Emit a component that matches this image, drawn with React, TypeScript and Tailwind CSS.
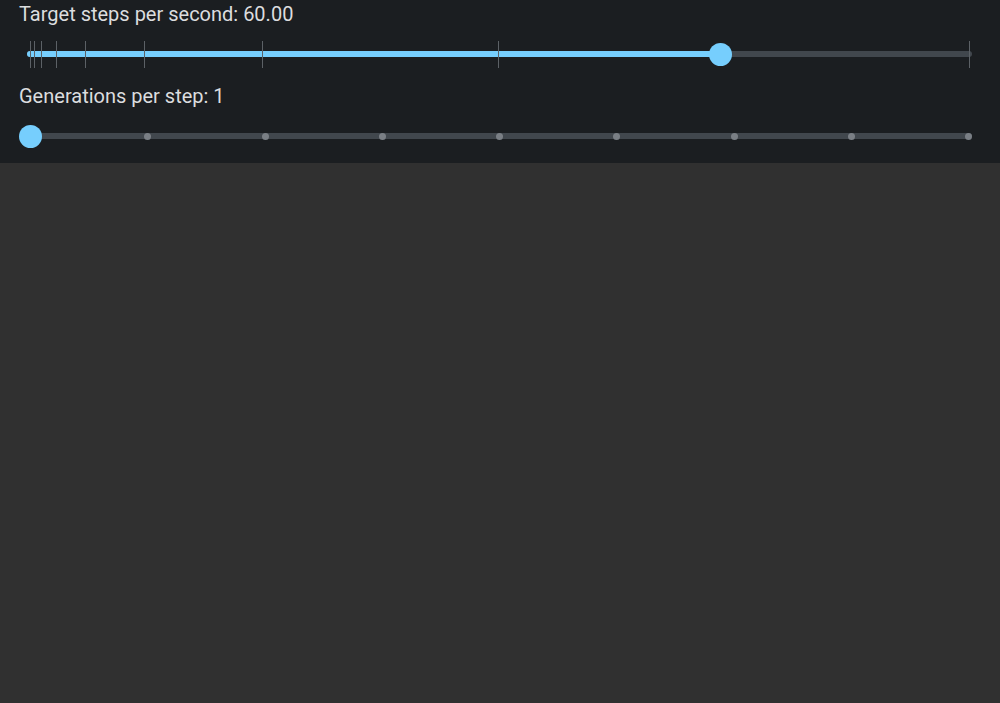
import React from "react";

const TICKS = [3, 7, 14, 29, 58, 117, 235, 471, 942];
const DOTS = [0, 1, 2, 3, 4, 5, 6, 7, 8];

function Label({ children }: { children: React.ReactNode }) {
  return (
    <div className="text-[20px] leading-[27px] text-[#dcdddf]" style={{ fontFamily: "Roboto, 'Noto Sans', sans-serif" }}>
      {children}
    </div>
  );
}

export default function App() {
  return (
    <div className="min-h-[703px] w-full bg-[#303030] flex flex-col" style={{ fontFamily: "Roboto, sans-serif" }}>
      <div className="bg-[#1b1e21] pl-[19px] pr-[28px] pt-[1px] h-[163px] flex flex-col">
        <Label>Target steps per second: 60.00</Label>
        <div className="relative h-[52px] ml-[8px] flex items-center">
          <div className="h-[6px] w-full rounded-full bg-[#41474d] flex">
            <div className="h-[6px] w-[696px] rounded-full bg-[#76cefd]" />
          </div>
          {TICKS.map((t) => (
            <div key={t} className="absolute top-[13px] h-[27px] w-[1px] bg-[#5c6166]" style={{ left: t }} />
          ))}
          <div className="absolute top-[15px] h-[23px] w-[23px] rounded-full bg-[#76cefd] left-[682px]" />
        </div>
        <div className="mt-[3px]">
          <Label>Generations per step: 1</Label>
        </div>
        <div className="relative h-[52px] ml-[8px] flex items-center">
          <div className="h-[6px] w-full rounded-full bg-[#41474d] flex items-center justify-between px-[0px]">
            {DOTS.map((i) => (
              <div key={i} className="h-[7px] w-[7px] rounded-full bg-[#7a7f85]" />
            ))}
          </div>
          <div className="absolute top-[14.5px] h-[23px] w-[23px] rounded-full bg-[#76cefd] left-[-8px]" />
        </div>
      </div>
    </div>
  );
}
